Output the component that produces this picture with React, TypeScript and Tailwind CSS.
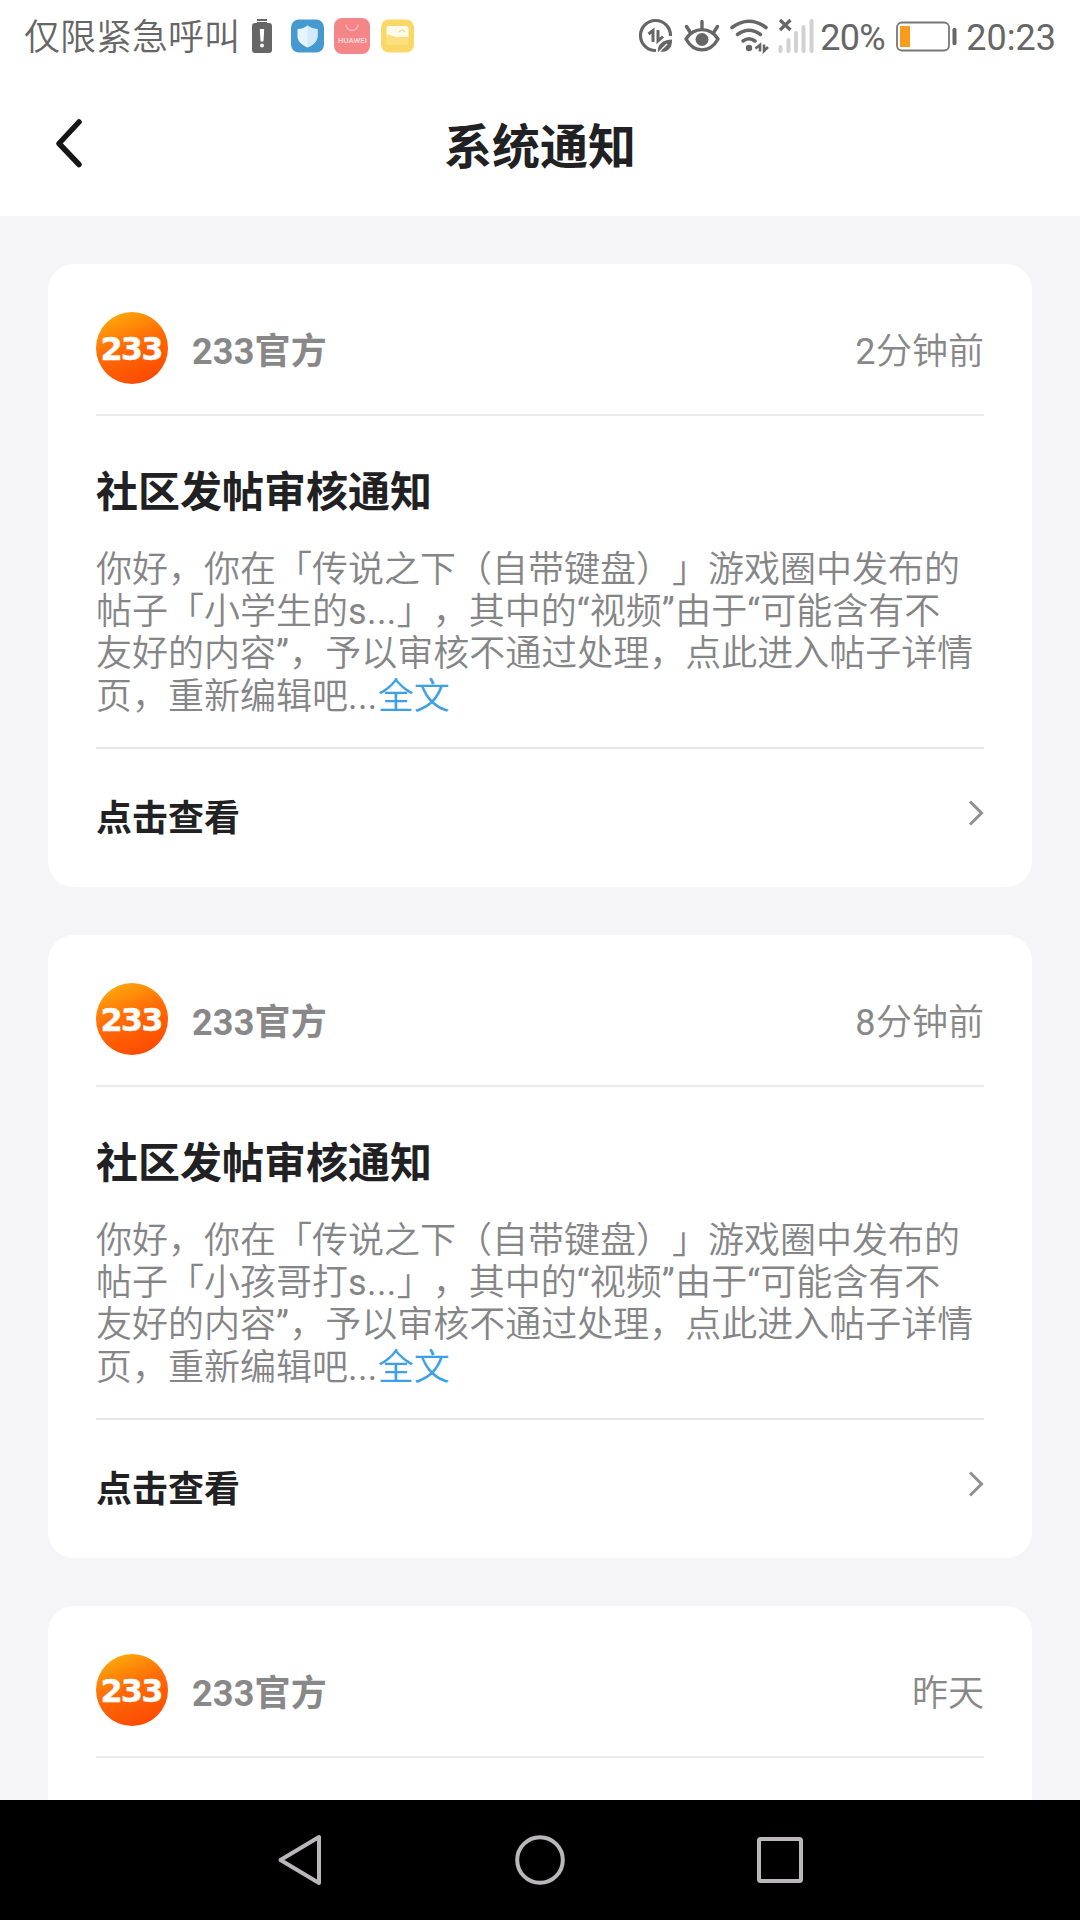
import type { ReactNode } from 'react';

interface Notice {
  id: number;
  time: string;
  lines?: string[];
}

const notices: Notice[] = [
  {
    id: 1,
    time: '2分钟前',
    lines: [
      '你好，你在「传说之下（自带键盘）」游戏圈中发布的',
      '帖子「小学生的s...」，其中的“视频”由于“可能含有不',
      '友好的内容”，予以审核不通过处理，点此进入帖子详情',
      '页，重新编辑吧...',
    ],
  },
  {
    id: 2,
    time: '8分钟前',
    lines: [
      '你好，你在「传说之下（自带键盘）」游戏圈中发布的',
      '帖子「小孩哥打s...」，其中的“视频”由于“可能含有不',
      '友好的内容”，予以审核不通过处理，点此进入帖子详情',
      '页，重新编辑吧...',
    ],
  },
  { id: 3, time: '昨天' },
];

// Chinese glyphs are set in the demi-light cut, latin runs stay regular
function MixedText({ text }: { text: string }) {
  return (
    <span className="font-[350]">
      {text.split(/([0-9a-z.“”]+)/).map((part, i) =>
        i % 2 ? <span key={i} className="font-normal tracking-[0.4px]">{part}</span> : part
      )}
    </span>
  );
}

function StatusBar() {
  return (
    <div className="h-[72px] pl-6 pr-6 flex items-center justify-between text-[36px] leading-none text-[#666]">
      <div className="flex items-center">
        <span className="pt-1 font-[350]">仅限紧急呼叫</span>
        <svg className="ml-3" width="20" height="36" viewBox="0 0 20 36">
          <rect x="5" y="1" width="10" height="2" fill="#666" />
          <path d="M5 4H15V5H17Q20 5 20 8V32Q20 35 17 35H3Q0 35 0 32V8Q0 5 3 5H5Z" fill="#666" />
          <path d="M7.800 11H12.200L11.500 23.500H8.500Z" fill="#fff" />
          <circle cx="10" cy="27.500" r="2" fill="#fff" />
        </svg>
        <svg className="ml-[19px]" width="33" height="36" viewBox="0 0 33 36">
          <rect y="1.5" width="33" height="33" rx="8" fill="#4698d0" />
          <path d="M16.5 7.500C19.500 10 23 11 26.500 11V18C26.500 23.500 22 27 16.500 29.500C11 27 6.500 23.500 6.500 18V11C10 11 13.500 10 16.500 7.500Z" fill="#e6f4fb" />
          <path d="M16.500 7.500C19.500 10 23 11 26.500 11V18C26.500 23.500 22 27 16.500 29.500Z" fill="#d3e9f5" />
        </svg>
        <svg className="ml-[10px]" width="36" height="36" viewBox="0 0 36 36">
          <rect width="36" height="36" rx="8" fill="#f58688" />
          <path d="M12 6.500C13 14.500 23 14.500 24 6.500" fill="none" stroke="#fbb5b5" strokeWidth="1.500" />
          <text x="4" y="24.500" textLength="29" lengthAdjust="spacingAndGlyphs" fontSize="8" fontWeight="700" fill="#fcd5d5" className="font-['Roboto']">HUAWEI</text>
        </svg>
        <svg className="ml-[11px]" width="33" height="36" viewBox="0 0 33 36">
          <rect y="1.500" width="33" height="33" rx="8" fill="#fad866" />
          <path d="M7 8H25.500Q27.500 8 27.500 10.500V19H5.500V9.500Q5.500 8 7 8Z" fill="#fffbea" />
          <path d="M5.500 16L17 19.500H27.500V25Q27.500 27 25.500 27H7.500Q5.500 27 5.500 25Z" fill="#fbe080" />
          <path d="M18 14Q21 10.500 24 14" fill="none" stroke="#dfe2a8" strokeWidth="1.500" />
        </svg>
      </div>

      <div className="flex items-center">
        <svg width="34" height="36" viewBox="0 0 34 36" fill="none" stroke="#666">
          <path d="M17 32.500A15 15 0 1 1 31.500 18" strokeWidth="3.200" />
          <path d="M9.500 16L14 12.500V24M19 12V23L24 18.500" strokeWidth="3" />
          <path d="M19 34C18 26 24 22 33 21.500C33.500 30 28 35 22 33.500Z" fill="#666" stroke="none" />
          <path d="M20 34L28 26" stroke="#fff" strokeWidth="1.300" />
        </svg>
        <svg className="ml-[11px]" width="36" height="36" viewBox="0 0 36 36" fill="none" stroke="#666" strokeWidth="3.400">
          <path d="M2 21C10 8.500 26 8.500 34 21C26 35.500 10 35.500 2 21Z" strokeLinejoin="round" />
          <path d="M18 3.500V11M2.500 8.500L6 14M33.500 8.500L30 14" strokeLinecap="round" />
          <circle cx="18" cy="21.500" r="6.500" fill="#666" stroke="none" />
        </svg>
        <svg className="ml-[10px]" width="39" height="36" viewBox="0 0 39 36" fill="none" stroke="#666" strokeWidth="3.600" strokeLinecap="round">
          <path d="M2 9.500Q19 -3 36 9.500" />
          <path d="M7.500 16.500Q19 8 30.500 16.500" />
          <path d="M13 23Q19 18.500 25 23" />
          <circle cx="19" cy="30" r="3.200" fill="#666" stroke="none" />
          <path d="M25.500 30.500L30 27V33.500M34 26.500V33L38 29" strokeWidth="2.600" strokeLinecap="butt" />
        </svg>
        <svg className="ml-[9px]" width="36" height="36" viewBox="0 0 36 36">
          <path d="M2 2L12.500 12M12.500 2L2 12" stroke="#666" strokeWidth="3.200" />
          <path d="M2.500 33V29M10.500 33V22M18 33V15M25.500 33V9M33.500 33V3" stroke="#d2d2d2" strokeWidth="4" strokeLinecap="round" />
        </svg>
        <span className="ml-[6px] w-[67px] pt-1 tracking-[-0.8px]">20%</span>
        <svg className="ml-[9px]" width="61" height="36" viewBox="0 0 61 36">
          <rect x="1" y="4.500" width="52" height="28" rx="5" fill="none" stroke="#777" strokeWidth="1.800" />
          <rect x="4" y="8" width="10" height="21" fill="#fb9b1e" />
          <rect x="56.500" y="10" width="4" height="17" rx="1.500" fill="#666" />
        </svg>
        <span className="ml-[9px] pt-1">20:23</span>
      </div>
    </div>
  );
}

function Header() {
  return (
    <header className="h-36 px-[55px] grid grid-cols-[1fr_auto_1fr] items-center">
      <svg width="28" height="50" viewBox="0 0 28 50" fill="none" stroke="#161616" strokeWidth="5.500" strokeLinecap="round" strokeLinejoin="round">
        <path d="M24 3L4 24.500L24 45.500" />
      </svg>
      <h1 className="pt-2 text-[48px] leading-none font-bold text-[#212123]">系统通知</h1>
    </header>
  );
}

function Avatar() {
  return (
    <svg width="72" height="72" viewBox="0 0 72 72">
      <defs>
        <linearGradient id="avatar" x1="0.150" y1="0" x2="0.550" y2="1">
          <stop offset="0" stopColor="#ffb00c" />
          <stop offset="0.500" stopColor="#ff6c06" />
          <stop offset="1" stopColor="#fc4c02" />
        </linearGradient>
      </defs>
      <circle cx="36" cy="36" r="36" fill="url(#avatar)" />
      <text x="4.500" y="47.500" textLength="63" fontSize="32" fontWeight="700" fill="#fff" stroke="#fff" strokeWidth="0.300" className="font-['DejaVu_Sans']">233</text>
    </svg>
  );
}

function Card({ time, children }: { time: string; children?: ReactNode }) {
  return (
    <section className="h-[623px] shrink-0 rounded-[26px] bg-white px-12 pt-12">
      <div className="h-[104px] flex items-start border-b-2 border-[#ebebec]">
        <Avatar />
        <div className="ml-6 h-[79px] flex-1 flex items-center justify-between text-[36px] leading-none text-[#888]">
          <span className="font-bold tracking-[0.2px]">233官方</span>
          <MixedText text={time} />
        </div>
      </div>
      {children}
    </section>
  );
}

export default function App() {
  return (
    <div className="w-[1080px] h-[1920px] flex flex-col overflow-hidden bg-white font-['Roboto','Noto_Sans_CJK_SC',sans-serif]">
      <StatusBar />
      <Header />

      <main className="flex-1 min-h-0 overflow-hidden bg-[#f5f5f7] px-12 pt-12 flex flex-col gap-12">
        {notices.map((notice) => (
          <Card key={notice.id} time={notice.time}>
            {notice.lines && (
              <>
                <h2 className="mt-14 text-[42px] leading-[42px] font-bold text-[#212123]">社区发帖审核通知</h2>
                <p className="mt-[35px] h-[198px] text-[36px] leading-[42.200px] text-[#858587] whitespace-nowrap [text-spacing-trim:space-all]">
                  {notice.lines.map((line, i) => (
                    <span key={line} className="block">
                      <MixedText text={line} />
                      {i === 3 && <a className="font-[350] text-[#3ca0e6]">全文</a>}
                    </span>
                  ))}
                </p>
                <div className="h-[138px] border-t-2 border-[#e6e6e8] flex items-center justify-between">
                  <span className="pt-[3px] text-[36px] leading-none font-bold text-[#212123]">点击查看</span>
                  <svg className="mb-2" width="16" height="28" viewBox="0 0 16 28" fill="none" stroke="#909092" strokeWidth="3">
                    <path d="M2 2.500L13.500 14L2 25.500" />
                  </svg>
                </div>
              </>
            )}
          </Card>
        ))}
      </main>

      <nav className="h-[120px] shrink-0 bg-black flex items-center justify-between pl-[277px] pr-[277px]">
        <svg width="46" height="52" viewBox="0 0 46 52" fill="none" stroke="#b9b7ba" strokeWidth="4" strokeLinejoin="round">
          <path d="M42 3V49L3.500 26Z" />
        </svg>
        <svg width="50" height="50" viewBox="0 0 50 50" fill="none" stroke="#b9b7ba" strokeWidth="4">
          <circle cx="25" cy="25" r="22.800" />
        </svg>
        <svg width="46" height="46" viewBox="0 0 46 46" fill="none" stroke="#b9b7ba" strokeWidth="4">
          <rect x="2" y="2" width="42" height="42" rx="1.500" />
        </svg>
      </nav>
    </div>
  );
}
